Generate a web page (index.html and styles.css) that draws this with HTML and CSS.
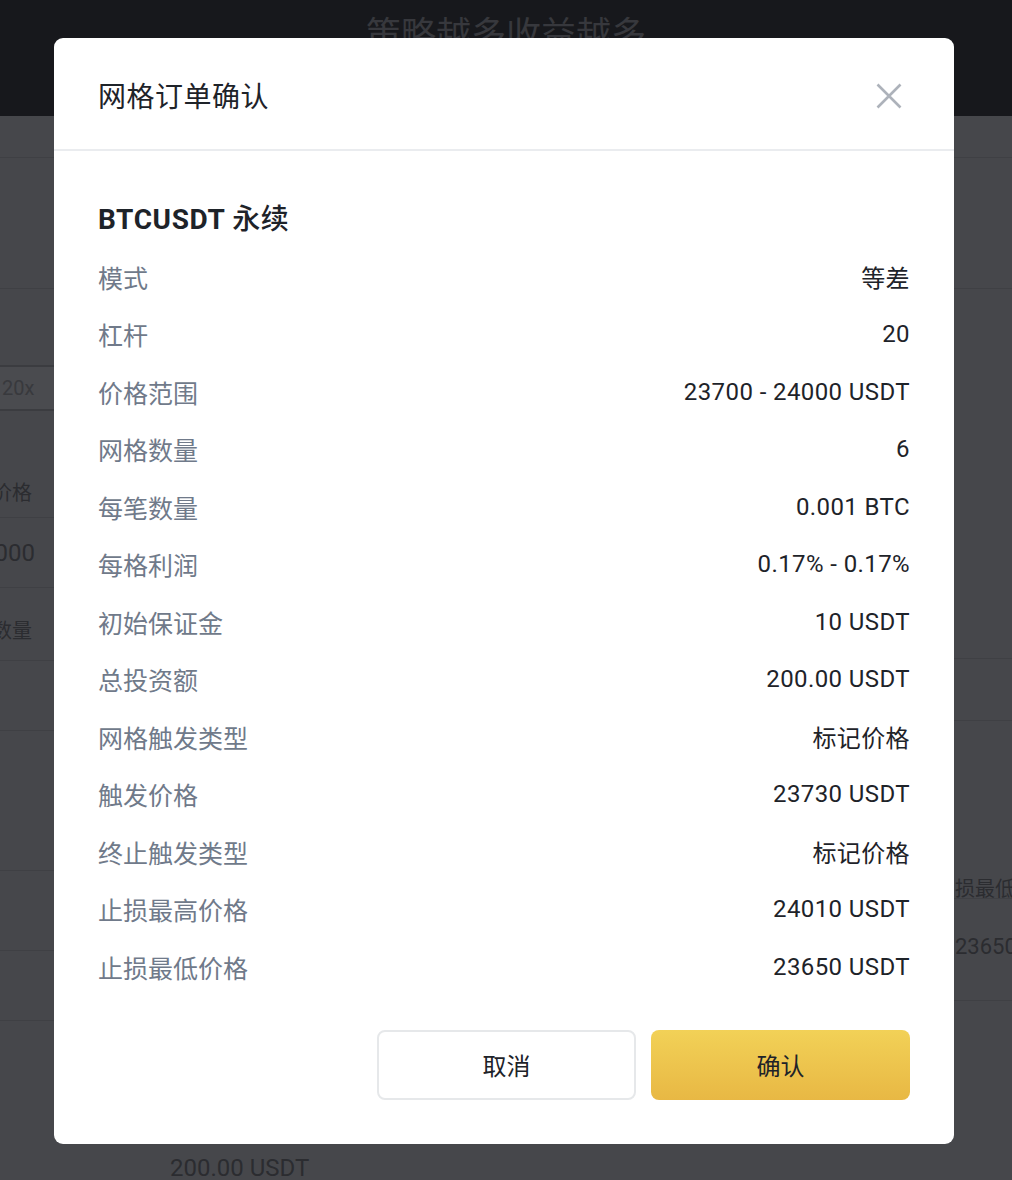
FILE: index.html
```html
<!DOCTYPE html>
<html lang="zh-CN">
<head>
    <meta charset="UTF-8" />
    <meta name="viewport" content="width=device-width, initial-scale=1.0" />
    <title>网格订单确认</title>
    <link rel="stylesheet" href="styles.css">
</head>
<body>
    <!-- Page behind the dialog (dimmed) -->
    <div class="topbar">
        <div class="slogan">策略越多收益越多</div>
    </div>
    <div class="page">
        <div class="edge edge-left">
            <div class="blk h42 line"></div>
            <div class="blk h131 line"></div>
            <div class="blk h76"></div>
            <div class="lev-box">20x</div>
            <div class="blk h57"></div>
            <div class="field-label line">价格</div>
            <div class="field-value line">000</div>
            <div class="field-label h73 line">数量</div>
            <div class="blk h70 line"></div>
            <div class="blk h140 line"></div>
            <div class="blk h80 line"></div>
            <div class="blk h70 line"></div>
        </div>
        <div class="center"></div>
        <div class="edge edge-right">
            <div class="blk h42 line"></div>
            <div class="blk h131 line"></div>
            <div class="blk h370 line"></div>
            <div class="blk h62 line"></div>
            <div class="field-label right h178 line">损最低价格</div>
            <div class="field-value right h102 line">23650 USDT</div>
        </div>
    </div>
    <div class="bottom-text">200.00 USDT</div>

    <!-- Confirm dialog -->
    <div class="modal">
        <div class="modal-header">
            <h2 class="modal-title">网格订单确认</h2>
            <button class="modal-close" aria-label="close">
                <svg width="26" height="26" viewBox="0 0 26 26">
                    <path d="M1.5 1.5 L24.5 24.5 M24.5 1.5 L1.5 24.5" stroke="#adb2ba" stroke-width="2.6" fill="none" />
                </svg>
            </button>
        </div>
        <div class="modal-body">
            <div class="symbol">BTCUSDT <span class="symbol-type">永续</span></div>
            <div class="row"><span class="label">模式</span><span class="value">等差</span></div>
            <div class="row"><span class="label">杠杆</span><span class="value">20</span></div>
            <div class="row"><span class="label">价格范围</span><span class="value">23700 - 24000 USDT</span></div>
            <div class="row"><span class="label">网格数量</span><span class="value">6</span></div>
            <div class="row"><span class="label">每笔数量</span><span class="value">0.001 BTC</span></div>
            <div class="row"><span class="label">每格利润</span><span class="value">0.17% - 0.17%</span></div>
            <div class="row"><span class="label">初始保证金</span><span class="value">10 USDT</span></div>
            <div class="row"><span class="label">总投资额</span><span class="value">200.00 USDT</span></div>
            <div class="row"><span class="label">网格触发类型</span><span class="value">标记价格</span></div>
            <div class="row"><span class="label">触发价格</span><span class="value">23730 USDT</span></div>
            <div class="row"><span class="label">终止触发类型</span><span class="value">标记价格</span></div>
            <div class="row"><span class="label">止损最高价格</span><span class="value">24010 USDT</span></div>
            <div class="row"><span class="label">止损最低价格</span><span class="value">23650 USDT</span></div>
        </div>
        <div class="modal-footer">
            <button class="btn btn-cancel">取消</button>
            <button class="btn btn-confirm">确认</button>
        </div>
    </div>
</body>
</html>
```
FILE: styles.css
```css
body {
    font-family: Roboto, "Noto Sans CJK SC", sans-serif;
    background-color: #46474b;
    margin: 0;
    padding: 0;
    overflow: hidden;
    height: 1180px;
}
/* Dimmed page behind */
.topbar {
    height: 116px;
    background-color: #17181c;
    text-align: center;
    overflow: hidden;
    color: #37383d;
}
.slogan {
    font-size: 35px;
    line-height: 40px;
    margin-top: 16px;
}
.page {
    display: flex;
}
.edge {
    overflow: hidden;
    white-space: nowrap;
    color: #2b2c30;
    font-size: 20px;
}
.edge-left {
    width: 54px;
}
.edge-right {
    width: 58px;
}
.center {
    flex: 1;
}
.blk {
    box-sizing: border-box;
}
.line {
    border-bottom: 1px solid #3f4044;
    box-sizing: border-box;
}
.h42 { height: 42px; }
.h57 { height: 57px; }
.h62 { height: 62px; }
.h70 { height: 70px; }
.h76 { height: 76px; }
.h80 { height: 80px; }
.h102 { height: 102px; }
.h131 { height: 131px; }
.h140 { height: 140px; }
.h178 { height: 178px; }
.h370 { height: 370px; }
.lev-box {
    height: 42px;
    line-height: 42px;
    background-color: #4a4b4f;
    border-top: 2px solid #3b3c40;
    border-bottom: 2px solid #3b3c40;
    padding-left: 2px;
    color: #38393d;
    font-size: 20px;
}
.field-label {
    display: flex;
    justify-content: flex-end;
    padding-right: 22px;
    height: 50px;
    line-height: 50px;
    box-sizing: border-box;
}
.field-value {
    display: flex;
    justify-content: flex-end;
    padding-right: 19px;
    height: 70px;
    line-height: 70px;
    font-size: 24px;
    box-sizing: border-box;
}
.field-label.h73 {
    height: 73px;
    line-height: 86px;
}
.field-label.right,
.field-value.right {
    justify-content: flex-start;
    padding: 0 0 0 1px;
}
.field-label.h178 {
    height: 178px;
    line-height: 336px;
    overflow: hidden;
}
.field-value.h102 {
    height: 102px;
    line-height: 96px;
    font-size: 22px;
}
.bottom-text {
    position: absolute;
    left: 170px;
    top: 1154px;
    font-size: 24px;
    color: #2b2c30;
}
/* Modal */
.modal {
    position: absolute;
    top: 38px;
    left: 54px;
    width: 900px;
    background-color: #fff;
    border-radius: 9px;
    color: #1e2329;
}
.modal-header {
    display: flex;
    justify-content: space-between;
    align-items: center;
    height: 113px;
    padding: 0 52px 0 44px;
    border-bottom: 2px solid #eaecef;
    box-sizing: border-box;
}
.modal-title {
    margin: 0;
    font-size: 28px;
    font-weight: 400;
    letter-spacing: 0.5px;
    padding-top: 2px;
}
.modal-close {
    background: none;
    border: none;
    padding: 0;
    width: 26px;
    height: 26px;
    cursor: pointer;
    margin-top: 4px;
}
.modal-close svg {
    display: block;
}
.modal-body {
    padding: 48px 44px 0 44px;
}
.symbol {
    font-size: 28px;
    font-weight: 700;
    letter-spacing: 0.6px;
    line-height: 38px;
    margin-bottom: 9px;
    padding-top: 2px;
}
.symbol-type {
    font-weight: 500;
}
.row {
    display: flex;
    justify-content: space-between;
    align-items: center;
    height: 57.5px;
    font-size: 24px;
}
.label {
    color: #707a8a;
    font-size: 25px;
}
.value {
    color: #1e2329;
    letter-spacing: 0.4px;
}
.modal-footer {
    display: flex;
    justify-content: flex-end;
    gap: 15px;
    padding: 34px 44px 44px 44px;
}
.btn {
    width: 259px;
    height: 70px;
    border-radius: 8px;
    font-family: Roboto, "Noto Sans CJK SC", sans-serif;
    font-size: 24px;
    color: #1e2329;
    cursor: pointer;
}
.btn-cancel {
    background-color: #fff;
    border: 2px solid #e6e8ea;
}
.btn-confirm {
    border: none;
    background: linear-gradient(180deg, #f2d157 0%, #e8b844 100%);
}
```
